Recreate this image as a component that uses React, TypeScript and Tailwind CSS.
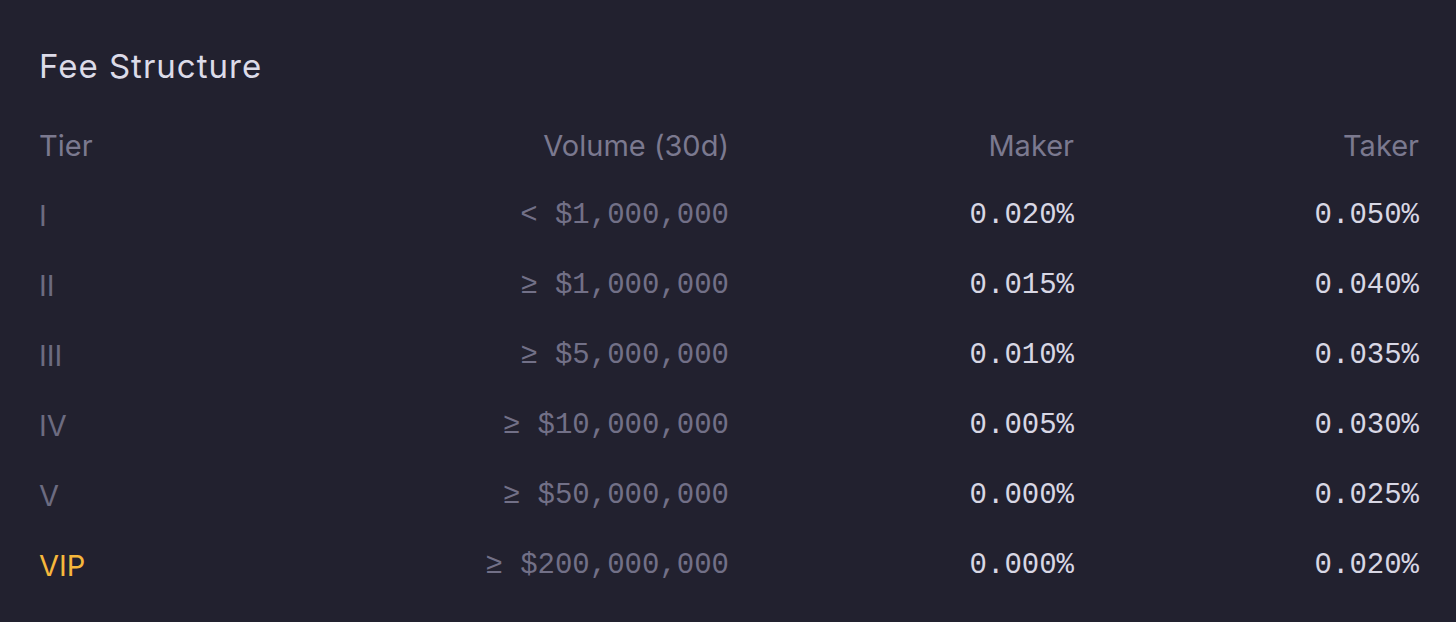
import React from 'react';

const tiers = [
  { tier: 'I', volume: '< $1,000,000', maker: '0.020%', taker: '0.050%' },
  { tier: 'II', volume: '≥ $1,000,000', maker: '0.015%', taker: '0.040%' },
  { tier: 'III', volume: '≥ $5,000,000', maker: '0.010%', taker: '0.035%' },
  { tier: 'IV', volume: '≥ $10,000,000', maker: '0.005%', taker: '0.030%' },
  { tier: 'V', volume: '≥ $50,000,000', maker: '0.000%', taker: '0.025%' },
  { tier: 'VIP', volume: '≥ $200,000,000', maker: '0.000%', taker: '0.020%', vip: true },
];

const sans = { fontFamily: 'Inter, "Noto Sans", sans-serif' };

const App = () => {
  return (
    <div className="w-full min-h-[622px] bg-[#22212f] pt-[46px] pl-[39px] pr-[37px]" style={sans}>
      {/* Title */}
      <h2 className="h-[40px] leading-[40px] text-[33px] tracking-[1px] text-[#dcdbe8] font-normal">
        Fee Structure
      </h2>

      {/* Table */}
      <div className="mt-[25px]">
        <div className="grid grid-cols-4 h-[70px] items-center text-[29px] text-[#7b798f]">
          <div>Tier</div>
          <div className="text-right">Volume (30d)</div>
          <div className="text-right">Maker</div>
          <div className="text-right">Taker</div>
        </div>
        {tiers.map((row) => (
          <div key={row.tier} className="grid grid-cols-4 h-[70px] items-center">
            <div className={`text-[29px] ${row.vip ? 'text-[#f6b73c]' : 'text-[#6c6b80]'}`}>{row.tier}</div>
            <div className="text-right text-[29px] text-[#727087] font-['Liberation_Mono',monospace]">
              {row.volume}
            </div>
            <div className="text-right text-[29px] text-[#d8d7e4] font-['Liberation_Mono',monospace]">
              {row.maker}
            </div>
            <div className="text-right text-[29px] text-[#d8d7e4] font-['Liberation_Mono',monospace]">
              {row.taker}
            </div>
          </div>
        ))}
      </div>
    </div>
  );
};

export default App;
